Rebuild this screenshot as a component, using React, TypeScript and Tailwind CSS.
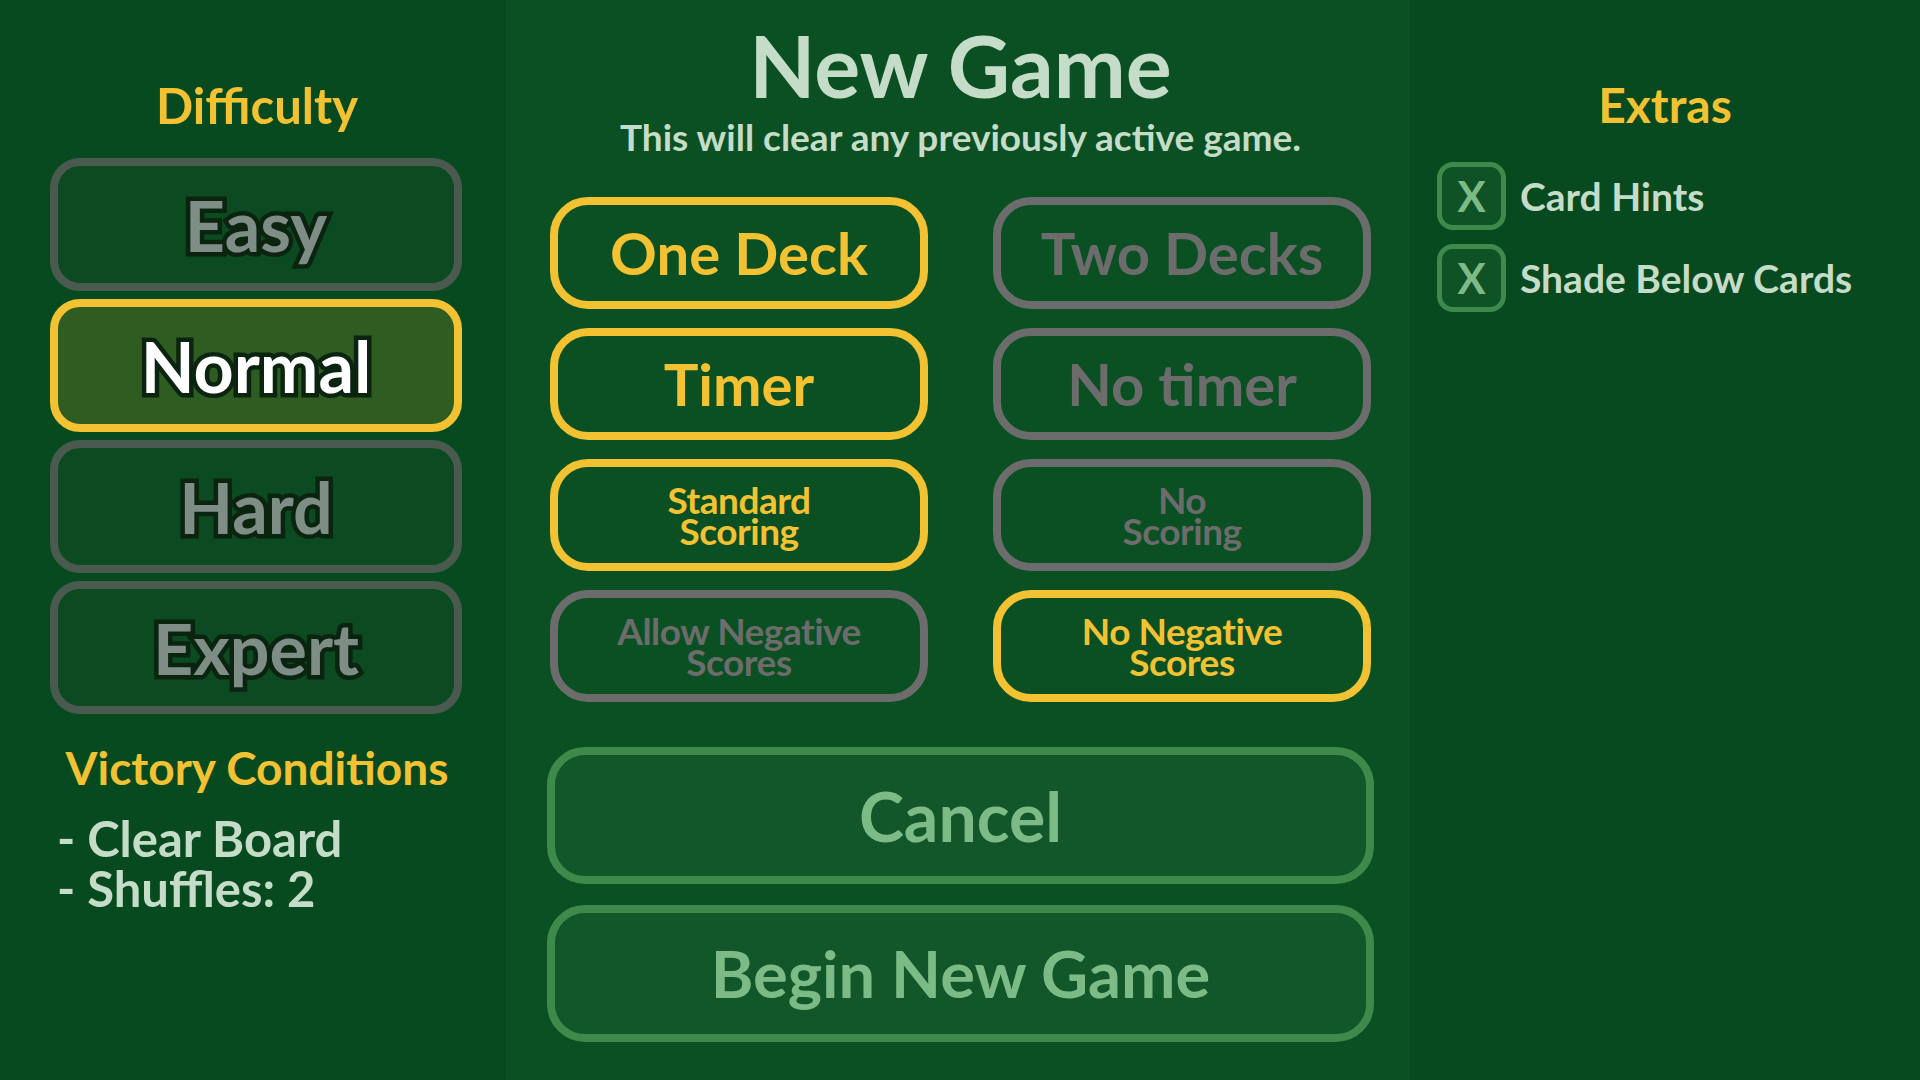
const DIFFICULTIES = [
  { label: "Easy", on: false },
  { label: "Normal", on: true },
  { label: "Hard", on: false },
  { label: "Expert", on: false },
];

const OPTIONS: { left: string[]; leftOn: boolean; right: string[]; rightOn: boolean; big: boolean }[] = [
  { left: ["One Deck"], leftOn: true, right: ["Two Decks"], rightOn: false, big: true },
  { left: ["Timer"], leftOn: true, right: ["No timer"], rightOn: false, big: true },
  { left: ["Standard", "Scoring"], leftOn: true, right: ["No", "Scoring"], rightOn: false, big: false },
  { left: ["Allow Negative", "Scores"], leftOn: false, right: ["No Negative", "Scores"], rightOn: true, big: false },
];

function DifficultyButton({ label, on }: { label: string; on: boolean }) {
  return (
    <div
      className={`ml-[50px] w-[412px] h-[133px] rounded-[30px] border-[8px] flex items-center justify-center ${
        on ? "border-[#f2c232] bg-[#2f5c20]" : "border-[#4a5a4e] bg-[#0c4a22]"
      }`}
    >
      <span
        className={`text-[70px] font-bold leading-none [paint-order:stroke_fill] [-webkit-text-stroke:9px_#0b2410] ${
          on ? "text-white" : "text-[#7f8d87]"
        }`}
      >
        {label}
      </span>
    </div>
  );
}

function OptionButton({ lines, on, big }: { lines: string[]; on: boolean; big: boolean }) {
  return (
    <div
      className={`h-[112px] rounded-[38px] border-[8px] flex flex-col items-center justify-center ${
        on ? "border-[#f2c232] text-[#f2c232]" : "border-[#6c6c6c] text-[#6c6c6c]"
      }`}
    >
      {lines.map((l) => (
        <span
          key={l}
          className={`font-bold ${big ? "text-[58px] leading-none" : "text-[37px] leading-[31px] tracking-[-0.5px]"}`}
        >
          {l}
        </span>
      ))}
    </div>
  );
}

function Checkbox({ label }: { label: string }) {
  return (
    <div className="flex items-center gap-[14px]">
      <div className="w-[69px] h-[68px] rounded-[16px] border-[5px] border-[#3e8a4a] bg-[#0f5226] flex items-center justify-center text-[42px] font-bold text-[#7dbb86] leading-none">
        X
      </div>
      <span className="text-[39px] font-bold text-[#c5dcc8] leading-none">{label}</span>
    </div>
  );
}

export default function App() {
  return (
    <div className="flex w-full h-screen overflow-hidden bg-[#084a1f] font-['Lato','Liberation_Sans',sans-serif]">
      {/* left: difficulty */}
      <div className="w-[506px] shrink-0 flex flex-col pt-[81px]">
        <h2 className="text-center text-[49px] font-bold text-[#f2c232] leading-none ml-[8px]">Difficulty</h2>
        <div className="mt-[28px] flex flex-col gap-[8px]">
          {DIFFICULTIES.map((d) => (
            <DifficultyButton key={d.label} label={d.label} on={d.on} />
          ))}
        </div>
        <h3 className="mt-[31px] text-center text-[46px] font-bold text-[#f2c232] leading-none ml-[8px]">
          Victory Conditions
        </h3>
        <div className="mt-[22px] ml-[57px] text-[49px] font-bold text-[#c5dcc8] leading-[50px]">
          <div>- Clear Board</div>
          <div>- Shuffles: 2</div>
        </div>
      </div>

      {/* center: new game */}
      <div className="w-[904px] shrink-0 bg-[#0b5022] flex flex-col pl-[41px] pr-[36px] pt-[22px]">
        <h1 className="text-center text-[86px] font-bold text-[#c5dcc8] leading-none">New Game</h1>
        <p className="mt-[10px] text-center text-[37px] font-bold text-[#c5dcc8] leading-none">
          This will clear any previously active game.
        </p>
        <div className="mt-[42px] grid grid-cols-2 gap-x-[65px] gap-y-[19px] px-[3px]">
          {OPTIONS.map((o) => (
            <div key={o.left.join(" ")} className="contents">
              <OptionButton lines={o.left} on={o.leftOn} big={o.big} />
              <OptionButton lines={o.right} on={o.rightOn} big={o.big} />
            </div>
          ))}
        </div>
        <div className="mt-[45px] flex flex-col gap-[21px]">
          <div className="h-[137px] rounded-[38px] border-[8px] border-[#3e8a4a] bg-[#12572a] flex items-center justify-center text-[68px] font-bold text-[#7dbb86] leading-none">
            Cancel
          </div>
          <div className="h-[137px] rounded-[38px] border-[8px] border-[#3e8a4a] bg-[#12572a] flex items-center justify-center text-[65px] font-bold text-[#7dbb86] leading-none">
            Begin New Game
          </div>
        </div>
      </div>

      {/* right: extras */}
      <div className="flex-1 flex flex-col pt-[81px] pl-[27px]">
        <h2 className="text-center text-[48px] font-bold text-[#f2c232] leading-none pr-[27px]">Extras</h2>
        <div className="mt-[33px] flex flex-col gap-[14px]">
          <Checkbox label="Card Hints" />
          <Checkbox label="Shade Below Cards" />
        </div>
      </div>
    </div>
  );
}
